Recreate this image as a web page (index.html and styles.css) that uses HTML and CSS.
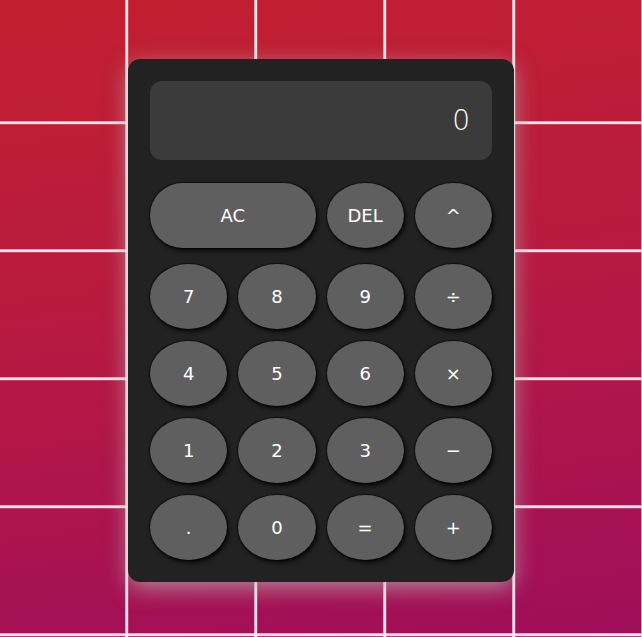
FILE: index.html
```html
<!DOCTYPE html>
<html lang="en">
<head>
<meta charset="utf-8">
<title>Calculator</title>
<link rel="stylesheet" href="styles.css">
</head>
<body>
<div class="calc">
  <div class="display">0</div>
  <div class="keys">
    <button class="key wide">AC</button>
    <button class="key">DEL</button>
    <button class="key op">^</button>
    <button class="key">7</button>
    <button class="key">8</button>
    <button class="key">9</button>
    <button class="key op">÷</button>
    <button class="key">4</button>
    <button class="key">5</button>
    <button class="key">6</button>
    <button class="key op">×</button>
    <button class="key">1</button>
    <button class="key">2</button>
    <button class="key">3</button>
    <button class="key op">−</button>
    <button class="key">.</button>
    <button class="key">0</button>
    <button class="key op">=</button>
    <button class="key op">+</button>
  </div>
</div>
</body>
</html>
```

FILE: styles.css
```css
html, body {
  margin: 0;
  height: 100%;
}
body {
  min-height: 637px;
  box-sizing: border-box;
  padding-top: 3px;
  display: flex;
  align-items: center;
  justify-content: center;
  font-family: "DejaVu Sans", "Open Sans", sans-serif;
  background:
    linear-gradient(90deg, transparent 125px, rgba(255,200,215,.45) 125px, rgba(255,240,245,.95) 126px, rgba(255,240,245,.95) 128px, rgba(255,200,215,.45) 128px, transparent 129px) 0 0 / 129px 100% repeat-x,
    linear-gradient(180deg, transparent 121px, rgba(255,200,215,.45) 121px, rgba(255,240,245,.95) 122px, rgba(255,240,245,.95) 124px, rgba(255,200,215,.45) 124px, transparent 125px) 0 0 / 100% 128px repeat-y,
    linear-gradient(172deg, #c2202f 0%, #b81a40 45%, #9f0e5b 100%);
}
.calc {
  width: 342px;
  padding: 22px;
  background: #222222;
  border-radius: 12px;
  box-shadow: 0 6px 22px rgba(180,180,180,.7);
}
.display {
  height: 79px;
  box-sizing: border-box;
  background: #3b3b3b;
  border-radius: 12px;
  color: #ffffff;
  font-size: 28px;
  font-weight: 300;
  text-align: right;
  padding-right: 22px;
  line-height: 79px;
  margin-bottom: 23px;
}
.keys {
  display: grid;
  grid-template-columns: repeat(4, 1fr);
  grid-template-rows: 69px repeat(4, 65px);
  gap: 12px 11px;
}
.key {
  height: 65px;
  border: none;
  border-radius: 50%;
  background: #5f5f5f;
  color: #ffffff;
  font-family: inherit;
  font-size: 18px;
  padding: 0;
  box-shadow: 0 0 1px 1px rgba(0,0,0,.55), 2px 3px 4px rgba(0,0,0,.75);
}
.key.wide {
  grid-column: span 2;
  border-radius: 33px;
}
.key.op {
  font-size: 18px;
}
```
